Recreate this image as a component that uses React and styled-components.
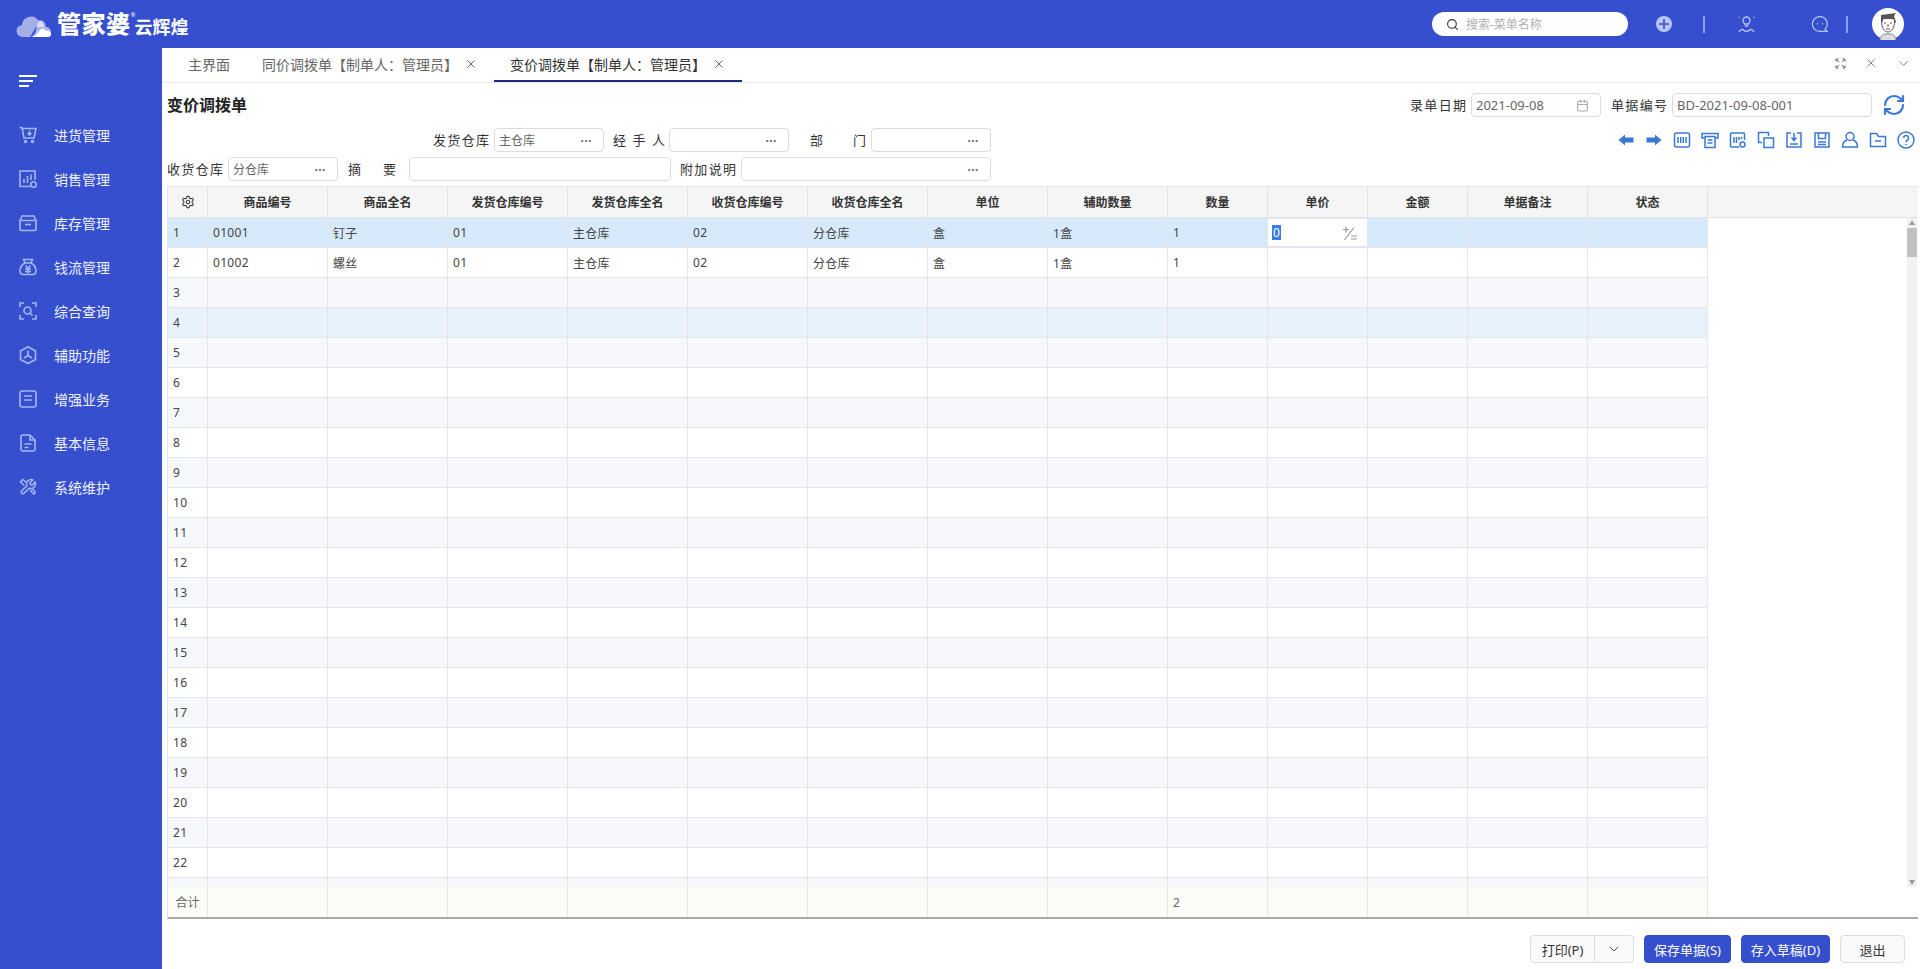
import React from 'react';
import styled, { createGlobalStyle } from 'styled-components';
import { Search, Settings, X, ChevronDown, Calendar, RefreshCw } from 'lucide-react';

const BLUE = '#364fce';
const ICON_BLUE = '#3a78d6';
const MENU_ICON = '#a4b7f0';
const FONT = '"Noto Sans", "Noto Sans CJK SC", sans-serif';

const GlobalStyle = createGlobalStyle`
  html, body {
    margin: 0;
    padding: 0;
    height: 100%;
    overflow: hidden;
    background: #fff;
    font-family: ${FONT};
    font-size: 12px;
  }
  * { box-sizing: border-box; }
`;

const Page = styled.div`
  display: flex;
  flex-direction: column;
  height: 969px;
  background: ${BLUE};
`;

const TopBar = styled.header`
  display: flex;
  align-items: center;
  flex: 0 0 48px;
  padding: 0 16px;
  color: #fff;
`;

const Logo = styled.div`
  display: flex;
  align-items: flex-end;
  height: 30px;
`;

const LogoMain = styled.span`
  font-size: 24px;
  font-weight: 900;
  line-height: 30px;
  margin-left: 5px;
  letter-spacing: 0.5px;
`;

const LogoReg = styled.sup`
  font-size: 6px;
  line-height: 6px;
  align-self: flex-start;
  margin: 3px 0 0 0;
`;

const LogoSub = styled.span`
  font-size: 18px;
  font-weight: 700;
  line-height: 24px;
  margin-left: -1px;
`;

const SearchBox = styled.div`
  display: flex;
  align-items: center;
  gap: 7px;
  width: 196px;
  height: 24px;
  margin-left: auto;
  padding-left: 14px;
  background: #fff;
  border-radius: 12px;
  color: #b0b0b0;
  font-size: 12px;
  svg { color: #333; }
`;

const TopIcon = styled.div`
  display: flex;
  margin-left: ${(p) => p.$ml}px;
`;

const TopDivider = styled.div`
  width: 2px;
  height: 17px;
  background: #8aa0ea;
  margin-left: ${(p) => p.$ml}px;
`;

const Avatar = styled.div`
  display: flex;
  margin-left: 24px;
`;

const Body = styled.div`
  display: flex;
  flex: 1;
  min-height: 0;
`;

const Sidebar = styled.nav`
  flex: 0 0 162px;
  padding-top: 27px;
  color: #fff;
`;

const Burger = styled.div`
  display: flex;
  flex-direction: column;
  gap: 3px;
  height: 18px;
  margin: 0 0 20px 19px;
  span {
    display: block;
    height: 2px;
    background: #fff;
  }
  span:nth-child(1) { width: 18px; }
  span:nth-child(2) { width: 14px; }
  span:nth-child(3) { width: 10px; }
`;

const MenuItem = styled.div`
  display: flex;
  align-items: center;
  gap: 17px;
  height: 44px;
  padding-left: 19px;
  font-size: 14px;
  color: #eef1ff;
`;

const Main = styled.main`
  display: flex;
  flex-direction: column;
  flex: 1;
  min-width: 0;
  background: #fff;
`;

const TabBar = styled.div`
  display: flex;
  align-items: stretch;
  flex: 0 0 35px;
  padding-left: 10px;
  border-bottom: 1px solid #e8e8e8;
`;

const Tab = styled.div`
  display: flex;
  align-items: center;
  gap: 6px;
  height: 34px;
  padding: 0 16px;
  font-size: 14px;
  color: ${(p) => (p.$active ? '#333' : '#666')};
  border-bottom: 2px solid ${(p) => (p.$active ? '#1f2a7a' : 'transparent')};
  svg { color: #555; }
`;

const TabTools = styled.div`
  display: flex;
  align-items: center;
  gap: 18px;
  margin-left: auto;
  padding: 0 9px 4px 0;
  color: #667;
`;

const Content = styled.div`
  display: flex;
  flex-direction: column;
  flex: 1;
  padding: 10px 2px 0 5px;
`;

const TitleRow = styled.div`
  display: flex;
  align-items: center;
  height: 24px;
`;

const Title = styled.h1`
  margin: 0 auto 3px 0;
  font-size: 16px;
  font-weight: 700;
  color: #222;
`;

const FieldRow = styled.div`
  display: flex;
  align-items: center;
  height: 24px;
  margin-top: ${(p) => p.$mt}px;
  padding-left: ${(p) => p.$indent || 0}px;
`;

const Label = styled.label`
  flex: 0 0 ${(p) => p.$w}px;
  margin-left: ${(p) => p.$ml || 0}px;
  font-size: 13px;
  line-height: 24px;
  color: #333;
  white-space: nowrap;
  text-align-last: justify;
`;

const InputBox = styled.div`
  display: flex;
  align-items: center;
  flex: 0 0 ${(p) => p.$w}px;
  height: 24px;
  margin-left: ${(p) => p.$ml}px;
  padding: 0 11px 0 4px;
  border: 1px solid #dcdcdc;
  border-radius: 4px;
  background: #fff;
  color: #888;
`;

const InputText = styled.input`
  flex: 1;
  width: 0;
  min-width: 0;
  border: 0;
  outline: 0;
  padding: 0;
  background: transparent;
  font-family: ${FONT};
  font-size: ${(p) => (p.$latin ? 13 : 12)}px;
  color: #666;
`;

const Dots = styled.span`
  font-size: 12px;
  font-weight: 700;
  letter-spacing: 0.5px;
  color: #666;
`;

const RefreshButton = styled.div`
  display: flex;
  margin: 0 12px 0 10px;
  color: ${ICON_BLUE};
`;

const Toolbar = styled.div`
  display: flex;
  align-items: center;
  gap: 10px;
  margin-left: auto;
  margin-right: 3px;
  color: ${ICON_BLUE};
`;

const Grid = styled.div`
  display: flex;
  flex-direction: column;
  margin-top: 5px;
  border-top: 1px solid #e5e5e5;
  border-left: 1px solid #e5e5e5;
  border-bottom: 2px solid #aaa;
`;

const GridHead = styled.div`
  display: flex;
  height: 31px;
  background: #f5f5f5;
  border-bottom: 1px solid #e2e2e2;
`;

const HeadCell = styled.div`
  display: flex;
  align-items: center;
  justify-content: center;
  flex: 0 0 ${(p) => p.$w}px;
  border-right: 1px solid #e2e2e2;
  font-weight: 600;
  color: #333;
`;

const GridBody = styled.div`
  display: flex;
  height: 669px;
`;

const RowList = styled.div`
  flex: 0 0 1540px;
  overflow: hidden;
`;

const RowBox = styled.div`
  display: flex;
  height: 30px;
  background: ${(p) => p.$bg};
  border-bottom: 1px solid #e5e5e5;
`;

const Cell = styled.div`
  display: flex;
  align-items: center;
  flex: 0 0 ${(p) => p.$w}px;
  padding-left: 5px;
  border-right: 1px solid #e5e5e5;
  letter-spacing: 0.3px;
  color: #444;
`;

const EditCell = styled.div`
  display: flex;
  align-items: center;
  justify-content: space-between;
  flex: 0 0 ${(p) => p.$w}px;
  padding: 0 9px 0 4px;
  margin: 1px 0;
  background: #fff;
  border-right: 1px solid #e5e5e5;
  color: #888;
`;

const SelectedText = styled.span`
  background: #3b7de8;
  color: #fff;
  padding: 0 1px;
  line-height: 15px;
`;

const BlankGap = styled.div`
  flex: 1;
`;

const Scrollbar = styled.div`
  display: flex;
  flex-direction: column;
  flex: 0 0 10px;
  margin-right: 1px;
  background: #f1f1f1;
`;

const ScrollArrow = styled.div`
  display: flex;
  align-items: center;
  justify-content: center;
  height: 10px;
  font-size: 6px;
  line-height: 10px;
  color: #999;
`;

const ScrollThumb = styled.div`
  height: 29px;
  background: #c1c1c1;
`;

const ScrollTrack = styled.div`
  flex: 1;
`;

const SumRow = styled.div`
  display: flex;
  height: 30px;
`;

const SumCell = styled.div`
  display: flex;
  align-items: center;
  justify-content: ${(p) => (p.$center ? 'center' : 'flex-start')};
  flex: 0 0 ${(p) => p.$w}px;
  padding-left: ${(p) => (p.$center ? 0 : 5)}px;
  background: #fcfdf7;
  border-right: 1px solid #e5e5e5;
  color: #666;
`;

const Footer = styled.footer`
  display: flex;
  justify-content: flex-end;
  gap: 10px;
  padding: 16px 13px 0 0;
`;

const SplitButton = styled.div`
  display: flex;
  height: 28px;
  border: 1px solid #ddd;
  border-radius: 4px;
  background: #fafafa;
`;

const SplitPart = styled.div`
  display: flex;
  align-items: center;
  justify-content: center;
  width: ${(p) => p.$w}px;
  font-size: 13px;
  color: #333;
  & + & { border-left: 1px solid #ddd; }
`;

const Button = styled.button`
  width: ${(p) => p.$w}px;
  height: 28px;
  padding: 0;
  border: 1px solid ${(p) => (p.$primary ? BLUE : '#ddd')};
  border-radius: 4px;
  background: ${(p) => (p.$primary ? BLUE : '#fafafa')};
  color: ${(p) => (p.$primary ? '#fff' : '#333')};
  font-family: ${FONT};
  font-size: 13px;
`;

const CloudLogo = () => (
  <svg width="36" height="24" viewBox="0 0 36 24">
    <path d="M7 22a6 6 0 0 1-1-12 9 9 0 0 1 16-5 8 8 0 0 1 6 7H20l-6 10z" fill="#fff" opacity="0.55" />
    <path d="M14 22c5-1 6-6 7-11 1-4 3-7 6-5 2 1 2 4 3 6a5 5 0 0 1 0 10z" fill="#fff" opacity="0.6" />
    <path d="M16 22c4-1 6-4 8-7 2-2 4-1 5 0l2 1a3 3 0 0 1 4 3c0 2-1 3-3 3z" fill="#fff" />
  </svg>
);

const MenuIcon = ({ children }) => (
  <svg width="18" height="18" viewBox="0 0 18 18" fill="none" stroke={MENU_ICON} strokeWidth="1.6">
    {children}
  </svg>
);

const menus = [
  ['进货管理', (
    <MenuIcon>
      <path d="M0.5 1.5h2.5l2 10.5h10l2-9.5H3.5" />
      <circle cx="6.5" cy="15.5" r="1" />
      <circle cx="13.5" cy="15.5" r="1" />
      <path d="M10.5 4.5v4M8.5 7l2 2 2-2" />
    </MenuIcon>
  )],
  ['销售管理', (
    <MenuIcon>
      <path d="M11 16.5H1V1h15v9" />
      <path d="M5 13V9M8.5 13V6M12 10V4.5" />
      <circle cx="14.5" cy="14.5" r="2.7" />
    </MenuIcon>
  )],
  ['库存管理', (
    <MenuIcon>
      <path d="M1 6.5V15.5a1 1 0 0 0 1 1h14a1 1 0 0 0 1-1V6.5L15 2H3zM1 6.5h16" />
      <path d="M6 10.5h6" />
    </MenuIcon>
  )],
  ['钱流管理', (
    <MenuIcon>
      <path d="M6 5 4.5 1.5h9L12 5" />
      <path d="M6 5c-3 1.5-5 5-5 8 0 2.5 1.5 3.5 3.5 3.5h9c2 0 3.5-1 3.5-3.5 0-3-2-6.5-5-8z" />
      <path d="M6.5 7.5 9 10.5l2.500-3M6 11h6M6 13.5h6M9 10.500v5" />
    </MenuIcon>
  )],
  ['综合查询', (
    <MenuIcon>
      <path d="M1 5V1h4M13 1h4v4M17 13v4h-4M5 17H1v-4" />
      <circle cx="8.5" cy="8.5" r="3.5" />
      <path d="m11 11 2.5 2.5" />
    </MenuIcon>
  )],
  ['辅助功能', (
    <MenuIcon>
      <path d="M9 .8 16.5 5v8.5L9 17.500 1.500 13.500V5z" />
      <path d="M9 4.500v5l-4 2.500M9 9.500l4 2.500" />
    </MenuIcon>
  )],
  ['增强业务', (
    <MenuIcon>
      <rect x="1" y="1" width="16" height="16" rx="2" />
      <path d="M5 6h8M5 10h8" />
    </MenuIcon>
  )],
  ['基本信息', (
    <MenuIcon>
      <path d="M11 1H4a2 2 0 0 0-2 2v12a2 2 0 0 0 2 2h10a2 2 0 0 0 2-2V6z" />
      <path d="M11 1v5h5M5.500 10h7M5.500 13.500h4" />
    </MenuIcon>
  )],
  ['系统维护', (
    <svg width="18" height="18" viewBox="0 0 24 24" fill="none" stroke={MENU_ICON} strokeWidth="2">
      <path d="M14.7 6.300a1 1 0 0 0 0 1.400l1.600 1.600a1 1 0 0 0 1.400 0l3.770-3.770a6 6 0 0 1-7.940 7.940l-6.910 6.910a2.120 2.120 0 0 1-3-3l6.910-6.910a6 6 0 0 1 7.940-7.940l-3.760 3.760z" />
      <path d="M7 10 2 5l3-3 5 4M15 16l4 5c2 1 3-1 2-3l-3-3" />
    </svg>
  )],
];

const ToolIcon = ({ children }) => (
  <svg width="18" height="18" viewBox="0 0 18 18" fill="none" stroke="currentColor" strokeWidth="1.500">
    {children}
  </svg>
);

const toolIcons = [
  <ToolIcon key="prev"><path d="M8 3.500 1.500 9 8 14.500V11.500h8.500v-5H8z" fill="currentColor" stroke="none" /></ToolIcon>,
  <ToolIcon key="next"><path d="M10 3.500 16.500 9 10 14.500V11.500H1.500v-5H10z" fill="currentColor" stroke="none" /></ToolIcon>,
  <ToolIcon key="code">
    <rect x="1.500" y="2" width="15" height="14" rx="2" />
    <path d="M5 6v6M7.700 6v6M10.300 6v6M13 6v6" />
  </ToolIcon>,
  <ToolIcon key="bill">
    <path d="M3.500 7H1V2.500h16V7h-2.500" />
    <path d="M4 5.500h10v11H4zM6.500 9h5M6.500 12h5" />
  </ToolIcon>,
  <ToolIcon key="codeset">
    <path d="M10 16H2.500a1 1 0 0 1-1-1V3a1 1 0 0 1 1-1h12a1 1 0 0 1 1 1v6" />
    <path d="M5 6v6M7.500 6v6M10 6v3M12.500 6v2" />
    <circle cx="13.500" cy="13.500" r="2.500" />
  </ToolIcon>,
  <ToolIcon key="copy">
    <path d="M5 11.500H1.500v-10h10V5" />
    <rect x="7" y="7" width="9.500" height="9.500" />
  </ToolIcon>,
  <ToolIcon key="import">
    <path d="M6 2H2v14h14V2h-4" />
    <path d="M9 2v7M6.500 6.500 9 9.500l2.500-3M5 13h8" />
  </ToolIcon>,
  <ToolIcon key="save">
    <path d="M2 2h14v14H2z" />
    <path d="M5.500 2v5.500h7V2M5 11h8M5 13.500h8" />
  </ToolIcon>,
  <ToolIcon key="user">
    <circle cx="9" cy="5.500" r="4" />
    <path d="M6 9c-3 1-4.500 3.500-4.500 7h15c0-3.500-1.500-6-4.500-7" />
  </ToolIcon>,
  <ToolIcon key="folder">
    <path d="M1.500 15.500V2.500h6l2 3h7v10z" />
    <path d="M6 10h6" />
  </ToolIcon>,
  <ToolIcon key="help">
    <circle cx="9" cy="9" r="8" />
    <path d="M6.500 7a2.500 2.500 0 1 1 3.800 2.100C9.400 9.700 9 10.200 9 11.200M9 13v1.200" />
  </ToolIcon>,
];

const columns = [
  { title: '', w: 40 },
  { title: '商品编号', w: 120 },
  { title: '商品全名', w: 120 },
  { title: '发货仓库编号', w: 120 },
  { title: '发货仓库全名', w: 120 },
  { title: '收货仓库编号', w: 120 },
  { title: '收货仓库全名', w: 120 },
  { title: '单位', w: 120 },
  { title: '辅助数量', w: 120 },
  { title: '数量', w: 100 },
  { title: '单价', w: 100 },
  { title: '金额', w: 100 },
  { title: '单据备注', w: 120 },
  { title: '状态', w: 120 },
];

const rowData = [
  ['1', '01001', '钉子', '01', '主仓库', '02', '分仓库', '盒', '1盒', '1'],
  ['2', '01002', '螺丝', '01', '主仓库', '02', '分仓库', '盒', '1盒', '1'],
];

const rowColor = (i) => {
  if (i === 0) return '#d6eafc';
  if (i === 3) return '#e8f2fc';
  return i % 2 === 0 ? '#f7f8fc' : '#fff';
};

const PlusMinus = () => (
  <svg width="16" height="16" viewBox="0 0 16 16" fill="none" stroke="#999" strokeWidth="1.200">
    <path d="M1 4.500h6M4 1.500v6M2.500 15 12 2.500M9 11h6M9 14h6" />
  </svg>
);

const GridRow = ({ index }) => {
  const data = rowData[index] || [];
  const label = index < 22 ? String(index + 1) : '';
  return (
    <RowBox $bg={rowColor(index)}>
      {columns.map((col, c) => {
        if (index === 0 && c === 10) {
          return (
            <EditCell key={c} $w={col.w}>
              <SelectedText>0</SelectedText>
              <PlusMinus />
            </EditCell>
          );
        }
        return (
          <Cell key={c} $w={col.w}>
            {c === 0 ? label : data[c]}
          </Cell>
        );
      })}
    </RowBox>
  );
};

const Field = ({ label, labelW, labelMl, gap = 5, w, value, latin, dots = true, children }) => (
  <>
    <Label $w={labelW} $ml={labelMl}>{label}</Label>
    <InputBox $w={w} $ml={gap}>
      <InputText readOnly value={value || ''} $latin={latin} />
      {dots && <Dots>···</Dots>}
      {children}
    </InputBox>
  </>
);

const App = () => (
  <Page>
    <GlobalStyle />
    <TopBar>
      <Logo>
        <CloudLogo />
        <LogoMain>管家婆</LogoMain>
        <LogoReg>®</LogoReg>
        <LogoSub>云辉煌</LogoSub>
      </Logo>
      <SearchBox>
        <Search size={13} strokeWidth={2} />
        搜索-菜单名称
      </SearchBox>
      <TopIcon $ml={28}>
        <svg width="16" height="16" viewBox="0 0 16 16">
          <circle cx="8" cy="8" r="8" fill="#b7c6f6" />
          <path d="M8 3v10M3 8h10" stroke={BLUE} strokeWidth="1.600" />
        </svg>
      </TopIcon>
      <TopDivider $ml={31} />
      <TopIcon $ml={33}>
        <svg width="17" height="18" viewBox="0 0 17 18" fill="none" stroke="#b7c6f6" strokeWidth="1.300">
          <path d="M5 5.500a3.500 3.500 0 1 1 7 0c0 1.500-1 2.300-1.500 3.500h-4C6 7.800 5 7 5 5.500zM6.800 11h3.400" />
          <path d="M1 17c1-3 4-3 5-1.500 1 1 4 1 5 0 1-1.500 4-1.500 5 1.500M.5 2l1 .8M16.500 2l-1 .8" />
        </svg>
      </TopIcon>
      <TopIcon $ml={57}>
        <svg width="16" height="16" viewBox="0 0 16 16" fill="none" stroke="#b7c6f6" strokeWidth="1.200">
          <path d="M15.400 15.400 13 13.300A7.400 7.400 0 1 0 8 15.400z" />
          <path d="M5.500 7v1.500M10.500 7v1.500" />
        </svg>
      </TopIcon>
      <TopDivider $ml={18} />
      <Avatar>
        <svg width="32" height="32" viewBox="0 0 32 32">
          <circle cx="16" cy="16" r="16" fill="#fff" />
          <path d="M9 14V7l15-2-2 3 2 6-1 1c-1-3-1-4-3-4H12c-1 0-1 2-2 4z" fill="#555" />
          <path d="M9.500 13c0 7 3 11 6.500 11s6.500-4 6.500-11" fill="none" stroke="#444" strokeWidth="0.900" />
          <path d="M12 15h2M18 15h2M16 16v3M14 21h4" stroke="#444" strokeWidth="0.900" fill="none" />
          <path d="M8 32c0-4 3-6 5-6h6c2 0 5 2 5 6" fill="#ddd" stroke="#666" strokeWidth="0.700" />
        </svg>
      </Avatar>
    </TopBar>
    <Body>
      <Sidebar>
        <Burger><span /><span /><span /></Burger>
        {menus.map(([name, icon]) => (
          <MenuItem key={name}>
            {icon}
            {name}
          </MenuItem>
        ))}
      </Sidebar>
      <Main>
        <TabBar>
          <Tab>主界面</Tab>
          <Tab>同价调拨单【制单人：管理员】<X size={14} strokeWidth={1.500} /></Tab>
          <Tab $active>变价调拨单【制单人：管理员】<X size={14} strokeWidth={1.500} /></Tab>
          <TabTools>
            <svg width="11" height="11" viewBox="0 0 11 11" fill="none" stroke="currentColor" strokeWidth="1">
              <path d="M1 1l3 3M10 1 7 4M1 10l3-3M10 10 7 7M1 3.500V1h2.500M7.500 1H10v2.500M1 7.500V10h2.500M7.500 10H10V7.500" />
            </svg>
            <X size={14} strokeWidth={1.300} />
            <ChevronDown size={15} strokeWidth={1.300} />
          </TabTools>
        </TabBar>
        <Content>
          <TitleRow>
            <Title>变价调拨单</Title>
            <Field label="录单日期" labelW={56} w={130} value="2021-09-08" latin dots={false}>
              <Calendar size={13} color="#aaa" />
            </Field>
            <Field label="单据编号" labelW={56} labelMl={10} w={200} value="BD-2021-09-08-001" latin dots={false} />
            <RefreshButton><RefreshCw size={24} strokeWidth={2.200} /></RefreshButton>
          </TitleRow>
          <FieldRow $mt={11} $indent={266}>
            <Field label="发货仓库" labelW={56} w={110} value="主仓库" />
            <Field label="经手人" labelW={52} labelMl={9} gap={4} w={120} />
            <Field label="部门" labelW={56} labelMl={21} w={120} />
            <Toolbar>{toolIcons}</Toolbar>
          </FieldRow>
          <FieldRow $mt={5}>
            <Field label="收货仓库" labelW={56} w={110} value="分仓库" />
            <Field label="摘要" labelW={48} labelMl={10} gap={13} w={262} dots={false} />
            <Field label="附加说明" labelW={56} labelMl={9} w={250} />
          </FieldRow>
          <Grid>
            <GridHead>
              {columns.map((col, c) => (
                <HeadCell key={c} $w={col.w}>
                  {c === 0 ? <Settings size={14} color="#444" /> : col.title}
                </HeadCell>
              ))}
            </GridHead>
            <GridBody>
              <RowList>
                {Array.from({ length: 23 }, (_, i) => <GridRow key={i} index={i} />)}
              </RowList>
              <BlankGap />
              <Scrollbar>
                <ScrollArrow>▲</ScrollArrow>
                <ScrollThumb />
                <ScrollTrack />
                <ScrollArrow>▼</ScrollArrow>
              </Scrollbar>
            </GridBody>
            <SumRow>
              {columns.map((col, c) => (
                <SumCell key={c} $w={col.w} $center={c === 0}>
                  {c === 0 ? '合计' : c === 9 ? '2' : ''}
                </SumCell>
              ))}
            </SumRow>
          </Grid>
          <Footer>
            <SplitButton>
              <SplitPart $w={63}>打印(P)</SplitPart>
              <SplitPart $w={39}><ChevronDown size={16} strokeWidth={1.300} /></SplitPart>
            </SplitButton>
            <Button $primary $w={87}>保存单据(S)</Button>
            <Button $primary $w={89}>存入草稿(D)</Button>
            <Button $w={65}>退出</Button>
          </Footer>
        </Content>
      </Main>
    </Body>
  </Page>
);

export default App;
